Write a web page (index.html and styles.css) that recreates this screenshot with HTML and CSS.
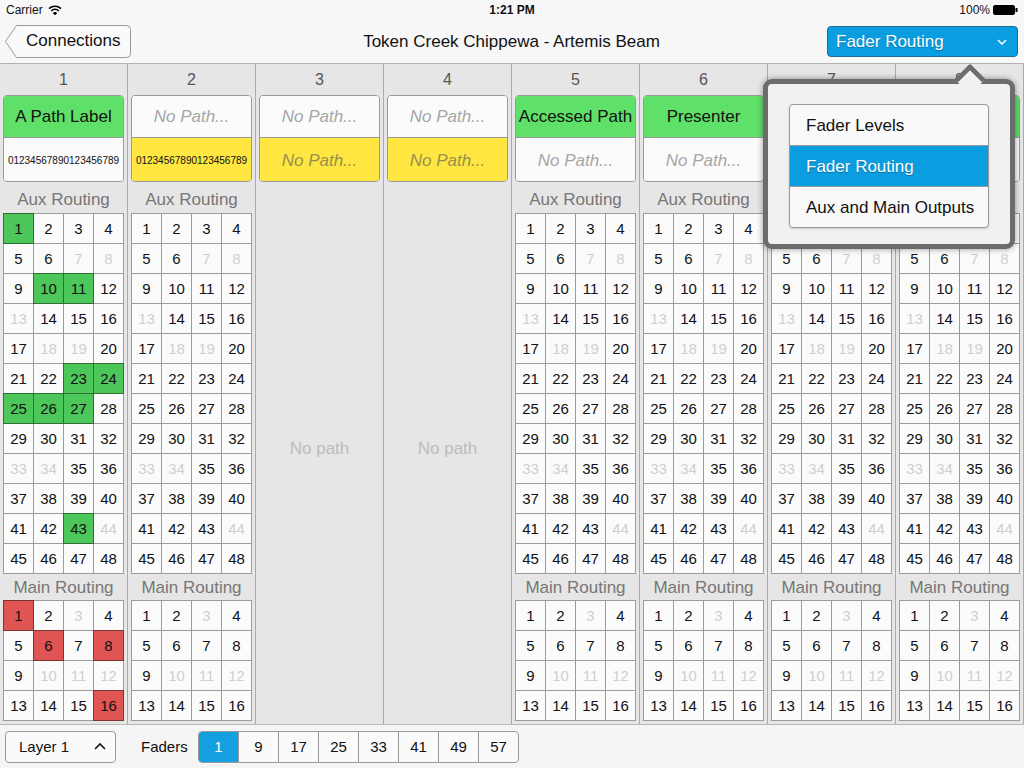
FILE: index.html
```html
<!DOCTYPE html>
<html>
<head>
<meta charset="utf-8">
<link rel="stylesheet" href="styles.css">
</head>
<body>
<div class="status">
  <div class="st-left">Carrier
    <svg class="wifi" width="14" height="10" viewBox="0 0 14 10"><path d="M1 3.6 A9 9 0 0 1 13 3.6" fill="none" stroke="#000" stroke-width="1.6"/><path d="M3.2 5.8 A6 6 0 0 1 10.8 5.8" fill="none" stroke="#000" stroke-width="1.6"/><path d="M5.3 8 A3 3 0 0 1 8.7 8 L7 9.8 Z" fill="#000" stroke="#000" stroke-width="1"/></svg>
  </div>
  <div class="st-time">1:21 PM</div>
  <div class="st-right">100%
    <svg class="batt" width="25" height="10" viewBox="0 0 25 10"><rect x="0.5" y="0.5" width="21" height="9" rx="1.5" fill="#000" stroke="#000"/><rect x="22.5" y="3" width="2" height="4" fill="#000"/></svg>
  </div>
</div>
<div class="nav">
  <div class="back">Connections</div>
  <div class="title">Token Creek Chippewa - Artemis Beam</div>
  <div class="mode">Fader Routing
    <svg width="10" height="6" viewBox="0 0 10 6"><polyline points="1,1 5,5 9,1" fill="none" stroke="#fff" stroke-width="1.5"/></svg>
  </div>
</div>

<div class="main">
  <div class="col">
    <div class="colnum">1</div>
    <div class="card"><div class="half green">A Path Label</div><div class="half white digits">01234567890123456789</div></div>
    <div class="sec">Aux Routing</div>
    <div class="grid"><span class="on">1</span><span>2</span><span>3</span><span>4</span><span>5</span><span>6</span><span class="off">7</span><span class="off">8</span><span>9</span><span class="on">10</span><span class="on">11</span><span>12</span><span class="off">13</span><span>14</span><span>15</span><span>16</span><span>17</span><span class="off">18</span><span class="off">19</span><span>20</span><span>21</span><span>22</span><span class="on">23</span><span class="on">24</span><span class="on">25</span><span class="on">26</span><span class="on">27</span><span>28</span><span>29</span><span>30</span><span>31</span><span>32</span><span class="off">33</span><span class="off">34</span><span>35</span><span>36</span><span>37</span><span>38</span><span>39</span><span>40</span><span>41</span><span>42</span><span class="on">43</span><span class="off">44</span><span>45</span><span>46</span><span>47</span><span>48</span></div>
    <div class="sec main-sec">Main Routing</div>
    <div class="grid"><span class="red">1</span><span>2</span><span class="off">3</span><span>4</span><span>5</span><span class="red">6</span><span>7</span><span class="red">8</span><span>9</span><span class="off">10</span><span class="off">11</span><span class="off">12</span><span>13</span><span>14</span><span>15</span><span class="red">16</span></div>
  </div>

  <div class="col">
    <div class="colnum">2</div>
    <div class="card"><div class="half white nopathtxt">No Path...</div><div class="half yellow digits">01234567890123456789</div></div>
    <div class="sec">Aux Routing</div>
    <div class="grid"><span>1</span><span>2</span><span>3</span><span>4</span><span>5</span><span>6</span><span class="off">7</span><span class="off">8</span><span>9</span><span>10</span><span>11</span><span>12</span><span class="off">13</span><span>14</span><span>15</span><span>16</span><span>17</span><span class="off">18</span><span class="off">19</span><span>20</span><span>21</span><span>22</span><span>23</span><span>24</span><span>25</span><span>26</span><span>27</span><span>28</span><span>29</span><span>30</span><span>31</span><span>32</span><span class="off">33</span><span class="off">34</span><span>35</span><span>36</span><span>37</span><span>38</span><span>39</span><span>40</span><span>41</span><span>42</span><span>43</span><span class="off">44</span><span>45</span><span>46</span><span>47</span><span>48</span></div>
    <div class="sec main-sec">Main Routing</div>
    <div class="grid"><span>1</span><span>2</span><span class="off">3</span><span>4</span><span>5</span><span>6</span><span>7</span><span>8</span><span>9</span><span class="off">10</span><span class="off">11</span><span class="off">12</span><span>13</span><span>14</span><span>15</span><span>16</span></div>
  </div>

  <div class="col">
    <div class="colnum">3</div>
    <div class="card"><div class="half white nopathtxt">No Path...</div><div class="half yellow nopathtxt ytxt">No Path...</div></div>
    <div class="nopath">No path</div>
  </div>

  <div class="col">
    <div class="colnum">4</div>
    <div class="card"><div class="half white nopathtxt">No Path...</div><div class="half yellow nopathtxt ytxt">No Path...</div></div>
    <div class="nopath">No path</div>
  </div>

  <div class="col">
    <div class="colnum">5</div>
    <div class="card"><div class="half green">Accessed Path</div><div class="half white nopathtxt">No Path...</div></div>
    <div class="sec">Aux Routing</div>
    <div class="grid"><span>1</span><span>2</span><span>3</span><span>4</span><span>5</span><span>6</span><span class="off">7</span><span class="off">8</span><span>9</span><span>10</span><span>11</span><span>12</span><span class="off">13</span><span>14</span><span>15</span><span>16</span><span>17</span><span class="off">18</span><span class="off">19</span><span>20</span><span>21</span><span>22</span><span>23</span><span>24</span><span>25</span><span>26</span><span>27</span><span>28</span><span>29</span><span>30</span><span>31</span><span>32</span><span class="off">33</span><span class="off">34</span><span>35</span><span>36</span><span>37</span><span>38</span><span>39</span><span>40</span><span>41</span><span>42</span><span>43</span><span class="off">44</span><span>45</span><span>46</span><span>47</span><span>48</span></div>
    <div class="sec main-sec">Main Routing</div>
    <div class="grid"><span>1</span><span>2</span><span class="off">3</span><span>4</span><span>5</span><span>6</span><span>7</span><span>8</span><span>9</span><span class="off">10</span><span class="off">11</span><span class="off">12</span><span>13</span><span>14</span><span>15</span><span>16</span></div>
  </div>

  <div class="col">
    <div class="colnum">6</div>
    <div class="card"><div class="half green">Presenter</div><div class="half white nopathtxt">No Path...</div></div>
    <div class="sec">Aux Routing</div>
    <div class="grid"><span>1</span><span>2</span><span>3</span><span>4</span><span>5</span><span>6</span><span class="off">7</span><span class="off">8</span><span>9</span><span>10</span><span>11</span><span>12</span><span class="off">13</span><span>14</span><span>15</span><span>16</span><span>17</span><span class="off">18</span><span class="off">19</span><span>20</span><span>21</span><span>22</span><span>23</span><span>24</span><span>25</span><span>26</span><span>27</span><span>28</span><span>29</span><span>30</span><span>31</span><span>32</span><span class="off">33</span><span class="off">34</span><span>35</span><span>36</span><span>37</span><span>38</span><span>39</span><span>40</span><span>41</span><span>42</span><span>43</span><span class="off">44</span><span>45</span><span>46</span><span>47</span><span>48</span></div>
    <div class="sec main-sec">Main Routing</div>
    <div class="grid"><span>1</span><span>2</span><span class="off">3</span><span>4</span><span>5</span><span>6</span><span>7</span><span>8</span><span>9</span><span class="off">10</span><span class="off">11</span><span class="off">12</span><span>13</span><span>14</span><span>15</span><span>16</span></div>
  </div>

  <div class="col">
    <div class="colnum">7</div>
    <div class="card"><div class="half green">Lectern</div><div class="half white nopathtxt">No Path...</div></div>
    <div class="sec">Aux Routing</div>
    <div class="grid"><span>1</span><span>2</span><span>3</span><span>4</span><span>5</span><span>6</span><span class="off">7</span><span class="off">8</span><span>9</span><span>10</span><span>11</span><span>12</span><span class="off">13</span><span>14</span><span>15</span><span>16</span><span>17</span><span class="off">18</span><span class="off">19</span><span>20</span><span>21</span><span>22</span><span>23</span><span>24</span><span>25</span><span>26</span><span>27</span><span>28</span><span>29</span><span>30</span><span>31</span><span>32</span><span class="off">33</span><span class="off">34</span><span>35</span><span>36</span><span>37</span><span>38</span><span>39</span><span>40</span><span>41</span><span>42</span><span>43</span><span class="off">44</span><span>45</span><span>46</span><span>47</span><span>48</span></div>
    <div class="sec main-sec">Main Routing</div>
    <div class="grid"><span>1</span><span>2</span><span class="off">3</span><span>4</span><span>5</span><span>6</span><span>7</span><span>8</span><span>9</span><span class="off">10</span><span class="off">11</span><span class="off">12</span><span>13</span><span>14</span><span>15</span><span>16</span></div>
  </div>

  <div class="col">
    <div class="colnum">8</div>
    <div class="card"><div class="half green">Presenter 2</div><div class="half white nopathtxt">No Path...</div></div>
    <div class="sec">Aux Routing</div>
    <div class="grid"><span>1</span><span>2</span><span>3</span><span>4</span><span>5</span><span>6</span><span class="off">7</span><span class="off">8</span><span>9</span><span>10</span><span>11</span><span>12</span><span class="off">13</span><span>14</span><span>15</span><span>16</span><span>17</span><span class="off">18</span><span class="off">19</span><span>20</span><span>21</span><span>22</span><span>23</span><span>24</span><span>25</span><span>26</span><span>27</span><span>28</span><span>29</span><span>30</span><span>31</span><span>32</span><span class="off">33</span><span class="off">34</span><span>35</span><span>36</span><span>37</span><span>38</span><span>39</span><span>40</span><span>41</span><span>42</span><span>43</span><span class="off">44</span><span>45</span><span>46</span><span>47</span><span>48</span></div>
    <div class="sec main-sec">Main Routing</div>
    <div class="grid"><span>1</span><span>2</span><span class="off">3</span><span>4</span><span>5</span><span>6</span><span>7</span><span>8</span><span>9</span><span class="off">10</span><span class="off">11</span><span class="off">12</span><span>13</span><span>14</span><span>15</span><span>16</span></div>
  </div>
</div>

<div class="bottom">
  <div class="layer">Layer 1
    <svg width="12" height="7" viewBox="0 0 12 7"><polyline points="1,6 6,1 11,6" fill="none" stroke="#111" stroke-width="1.6"/></svg>
  </div>
  <div class="faders">Faders</div>
  <div class="seg"><span class="sel">1</span><span>9</span><span>17</span><span>25</span><span>33</span><span>41</span><span>49</span><span>57</span></div>
</div>

<div class="popover">
  <div class="list">
    <div class="item">Fader Levels</div>
    <div class="item sel">Fader Routing</div>
    <div class="item">Aux and Main Outputs</div>
  </div>
</div>
</body>
</html>
```

FILE: styles.css
```css
html, body {
  margin: 0;
  padding: 0;
}
body {
  width: 1024px;
  height: 768px;
  overflow: hidden;
  position: relative;
  font-family: "Liberation Sans", Arial, sans-serif;
  background: #e6e6e6;
  color: #111;
}

/* status bar */
.status {
  height: 20px;
  background: #f7f7f7;
  display: grid;
  grid-template-columns: 1fr auto 1fr;
  align-items: center;
  font-size: 12px;
  padding: 0 6px;
}
.st-left { display: flex; align-items: center; gap: 5px; }
.st-time { font-weight: bold; }
.st-right { display: flex; align-items: center; justify-content: flex-end; gap: 3px; }

/* nav bar */
.nav {
  height: 43px;
  background: #f7f7f7;
  border-bottom: 1px solid #b2b2b2;
  display: grid;
  grid-template-columns: 1fr auto 1fr;
  align-items: center;
  padding: 0 6px 0 5px;
}
.back {
  justify-self: start;
  width: 126px;
  height: 33px;
  box-sizing: border-box;
  padding-left: 21px;
  line-height: 32px;
  font-size: 17px;
  background: url("data:image/svg+xml,%3Csvg xmlns='http://www.w3.org/2000/svg' width='126' height='33'%3E%3Cpath d='M11.5 0.5 H121.5 Q125.5 0.5 125.5 4.5 V28.5 Q125.5 32.5 121.5 32.5 H11.5 L0.5 16.5 Z' fill='%23fafafa' stroke='%23999'/%3E%3C/svg%3E") no-repeat;
}
.title {
  font-size: 17px;
  padding-top: 1px;
}
.mode {
  justify-self: end;
  width: 191px;
  height: 31px;
  box-sizing: border-box;
  background: #0a9de0;
  border: 1px solid #1b6d9c;
  border-radius: 4px;
  color: #fff;
  font-size: 17px;
  display: flex;
  align-items: center;
  justify-content: space-between;
  padding: 0 10px 0 8px;
  text-shadow: 0 1px 1px rgba(0,0,0,.25);
}

/* main columns */
.main {
  display: flex;
  height: 660px;
}
.col {
  flex: none;
  border-right: 1px solid #a9a9a9;
  display: flex;
  flex-direction: column;
  padding: 0 3px;
  width: 121px;
}
.colnum {
  height: 31px;
  line-height: 31px;
  text-align: center;
  font-size: 16px;
  color: #555;
}
.card {
  height: 87px;
  box-sizing: border-box;
  border: 1px solid #999;
  border-radius: 4px;
  overflow: hidden;
  display: flex;
  flex-direction: column;
}
.half {
  flex: 1;
  display: flex;
  align-items: center;
  justify-content: center;
  font-size: 17px;
  white-space: nowrap;
}
.half + .half { border-top: 1px solid #999; padding-top: 2px; }
.green { background: #5fe068; }
.white { background: #fbfbfb; }
.yellow { background: #ffe640; }
.digits { font-size: 10px; }
.nopathtxt { font-style: italic; color: #a6a6a6; }
.ytxt { color: #9a8f4c; }

.sec {
  height: 31px;
  line-height: 35px;
  text-align: center;
  font-size: 17px;
  color: #777;
}
.main-sec { height: 26px; line-height: 28px; }

.grid {
  display: grid;
  grid-template-columns: repeat(4, 29px);
  grid-auto-rows: 29px;
  gap: 1px;
  padding: 1px;
  background: #9c9c9c;
  width: 119px;
}
.grid span {
  background: #fbfbfb;
  text-align: center;
  line-height: 30px;
  font-size: 15px;
  color: #111;
}
.grid span.off { color: #cfcfcf; }
.grid span.on { background: #4dc65a; outline: 1px solid #2f6f36; }
.grid span.red { background: #e05454; outline: 1px solid #7a3434; }

.nopath {
  flex: 1;
  display: flex;
  align-items: center;
  justify-content: center;
  padding-bottom: 8px;
  font-size: 17px;
  color: #bcbcbc;
}

/* bottom bar */
.bottom {
  height: 43px;
  border-top: 1px solid #b8b8b8;
  background: #f5f5f5;
  display: flex;
  align-items: center;
  padding-left: 5px;
}
.layer {
  width: 111px;
  height: 32px;
  box-sizing: border-box;
  border: 1px solid #999;
  border-radius: 4px;
  background: #fafafa;
  display: flex;
  align-items: center;
  justify-content: space-between;
  padding: 0 9px 1px 13px;
  font-size: 15px;
}
.faders {
  font-size: 15px;
  margin-left: 25px;
  width: 57px;
}
.seg {
  display: flex;
  height: 32px;
  box-sizing: border-box;
  border: 1px solid #999;
  border-radius: 4px;
  overflow: hidden;
  background: #fafafa;
}
.seg span {
  width: 39px;
  text-align: center;
  line-height: 30px;
  font-size: 15px;
}
.seg span + span { border-left: 1px solid #999; }
.seg span.sel { background: #14a0e0; color: #fff; }

/* popover */
.popover {
  position: absolute;
  left: 763px;
  top: 79px;
  width: 252px;
  height: 170px;
  box-sizing: border-box;
  border: 5px solid #6c6c6c;
  border-radius: 9px;
  background: #f1f1f1;
  box-shadow: 0 0 6px rgba(0,0,0,.4);
  padding: 20px 0 0 21px;
}
.popover::before {
  content: "";
  position: absolute;
  left: 191px;
  top: -16px;
  width: 22px;
  height: 22px;
  box-sizing: border-box;
  border-top: 5px solid #6c6c6c;
  border-left: 5px solid #6c6c6c;
  border-top-left-radius: 3px;
  background: #f1f1f1;
  transform: rotate(45deg);
}
.list {
  width: 200px;
  box-sizing: border-box;
  border: 1px solid #9a9a9a;
  border-radius: 4px;
  background: #f9f9f9;
  overflow: hidden;
  box-shadow: 0 1px 2px rgba(0,0,0,.15);
}
.item {
  height: 40px;
  line-height: 42px;
  padding-left: 16px;
  font-size: 17px;
}
.item + .item { border-top: 1px solid #9a9a9a; }
.item.sel {
  background: #0a9de0;
  color: #fff;
  text-shadow: 0 1px 1px rgba(0,0,0,.3);
}
```
